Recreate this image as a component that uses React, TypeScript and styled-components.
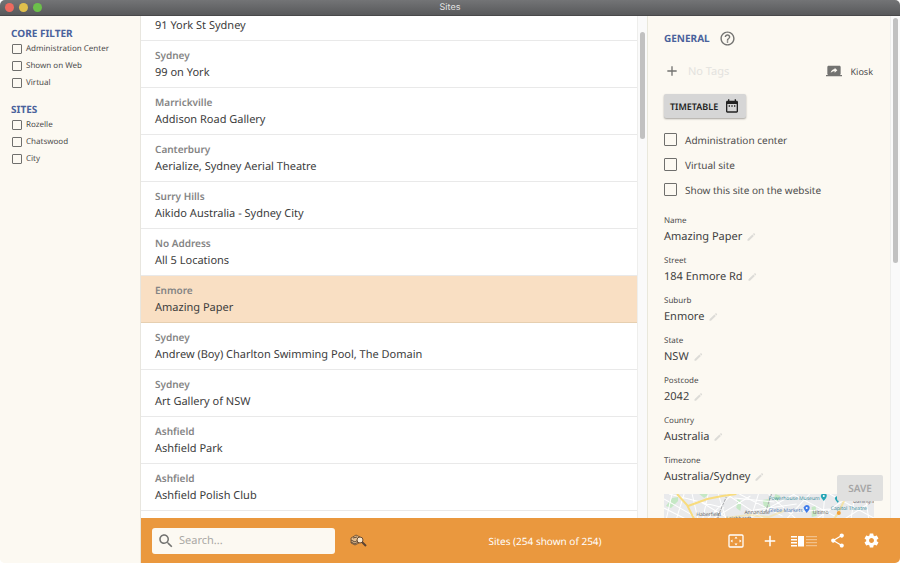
import React, { useLayoutEffect, useRef, useState } from "react";
import styled, { createGlobalStyle } from "styled-components";

const Global = createGlobalStyle`
  *, *::before, *::after { box-sizing: border-box; }
  html, body, #root { height: 100%; margin: 0; }
  body { background: #fff; overflow: hidden; font-family: "Noto Sans", "Open Sans", sans-serif; color: #4c4c4c; text-rendering: geometricPrecision; }
  button, input { font-family: inherit; color: inherit; margin: 0; text-rendering: inherit; }
  button { border: 0; padding: 0; background: none; cursor: pointer; }
  h2, ul, p, dl, dd { margin: 0; padding: 0; list-style: none; }
`;

const Window = styled.div`
  height: 100vh;
  display: flex;
  flex-direction: column;
  overflow: hidden;
  border-radius: 5px;
  background: #fcf9f2;
`;

const TitleBar = styled.header`
  flex: none;
  height: 16px;
  display: grid;
  grid-template-columns: 1fr auto 1fr;
  align-items: center;
  background: linear-gradient(#737476, #58595b);
  border-bottom: 1px solid #48484a;
  color: #e4e4e4;
  font: 9px/14px Inter, Roboto, sans-serif;
`;

const Lights = styled.div`
  display: flex;
  gap: 5px;
  padding-left: 5px;
`;

const Light = styled.button<{ $color: string }>`
  width: 9px;
  height: 9px;
  border-radius: 50%;
  background: ${(p) => p.$color};
`;

const Body = styled.div`
  flex: 1;
  min-height: 0;
  display: grid;
  grid-template-columns: 140px 1fr;
`;

const Sidebar = styled.aside`
  padding: 10px 11px;
  background: #fcf9f2;
`;

const FilterGroup = styled.section`
  margin-bottom: 11px;
`;

const Heading = styled.h2`
  font-size: 10px;
  line-height: 14px;
  font-weight: 700;
  color: #4a629c;
`;

const CheckLabel = styled.label<{ $large?: boolean }>`
  display: flex;
  align-items: center;
  gap: ${(p) => (p.$large ? 8 : 4)}px;
  height: ${(p) => (p.$large ? 25 : 17)}px;
  padding-left: ${(p) => (p.$large ? 0 : 1)}px;
  font-size: ${(p) => (p.$large ? 10 : 8)}px;
`;

const CheckInput = styled.input<{ $large?: boolean }>`
  appearance: none;
  flex: none;
  width: ${(p) => (p.$large ? 13 : 10)}px;
  height: ${(p) => (p.$large ? 13 : 10)}px;
  border: 1px solid #6f6f6d;
  border-radius: 1px;
  &:checked { background: #6f6f6d; }
`;

const Main = styled.div`
  min-width: 0;
  min-height: 0;
  display: flex;
  flex-direction: column;
  border-left: 1px solid #e8e6df;
`;

const Panes = styled.div`
  flex: 1;
  min-height: 0;
  display: grid;
  grid-template-columns: 1fr 253px;
`;

const ScrollPane = styled.section`
  min-width: 0;
  min-height: 0;
  display: grid;
  grid-template-columns: 1fr 10px;
`;

const SiteList = styled.ul`
  min-height: 0;
  overflow-y: auto;
  scrollbar-width: none;
  background: #fff;
`;

const SiteRow = styled.button<{ $selected: boolean }>`
  display: block;
  width: 100%;
  height: 47px;
  padding: 0 14px;
  text-align: left;
  border-bottom: 1px solid ${(p) => (p.$selected ? "#e6cfb0" : "#e9e9e9")};
  background: ${(p) => (p.$selected ? "#f9dfc3" : "#fff")};
`;

const Suburb = styled.span`
  display: block;
  font-size: 10px;
  line-height: 17px;
  font-weight: 600;
  color: #848484;
`;

const SiteName = styled.span`
  display: block;
  font-size: 11px;
  line-height: 17px;
  color: #3c3c3c;
`;

const Track = styled.div<{ $start: number }>`
  padding: ${(p) => p.$start}px 2px 0;
  background: #fafafa;
  border-left: 1px solid #eeeeec;
`;

const Thumb = styled.div<{ $share: number }>`
  height: ${(p) => p.$share}%;
  border-radius: 3px;
  background: #c1c1c1;
`;

const Detail = styled(ScrollPane)`
  position: relative;
  border-left: 1px solid #e9e8dc;
`;

const DetailBody = styled.div`
  min-height: 0;
  overflow: hidden;
  padding: 12px 16px 0;
  background: #fcf9f2;
`;

const Line = styled.div`
  display: flex;
  align-items: center;
`;

const HeadLine = styled(Line)`
  height: 20px;
  gap: 9px;
`;

const TagLine = styled(Line)`
  height: 46px;
  padding-right: 1px;
`;

const IconButton = styled.button`
  display: flex;
  align-items: center;
  justify-content: center;
  color: #737371;
`;

const TagInput = styled.input`
  flex: 1;
  min-width: 0;
  margin-left: 8px;
  padding: 0;
  border: 0;
  outline: 0;
  background: none;
  font-size: 11px;
  &::placeholder { color: #e3e2de; opacity: 1; }
`;

const Kiosk = styled(IconButton)`
  gap: 9px;
  font-size: 9px;

  span { color: #4c4c4c; }
`;

const Timetable = styled.button`
  display: flex;
  align-items: center;
  gap: 6px;
  height: 24px;
  padding: 0 6px;
  border-radius: 2px;
  background: #d6d6d6;
  box-shadow: 0 1px 2px rgba(0, 0, 0, 0.35);
  font-size: 9px;
  font-weight: 600;
  color: #222;
`;

const Checks = styled.div`
  padding: 9px 0 12px;
`;

const Field = styled.div`
  height: 40px;
`;

const FieldName = styled.dt`
  font-size: 8px;
  line-height: 14px;
`;

const FieldValue = styled.dd`
  display: flex;
  align-items: center;
  gap: 4px;
  font-size: 11px;
  line-height: 17px;
  color: #404040;
`;

const MapBox = styled.div`
  height: 100px;
  overflow: hidden;
`;

const Save = styled.button`
  position: absolute;
  right: 17px;
  bottom: 17px;
  width: 46px;
  height: 26px;
  border-radius: 2px;
  background: #e0e0df;
  font-size: 10px;
  font-weight: 600;
  color: #a5a5a5;
`;

const Footer = styled.footer`
  flex: none;
  height: 45px;
  display: grid;
  grid-template-columns: auto 1fr auto;
  align-items: center;
  padding: 0 16px 0 11px;
  background: #ea983e;
  color: #fff;
`;

const FooterSide = styled.div<{ $end?: boolean }>`
  display: flex;
  align-items: center;
  gap: ${(p) => (p.$end ? 12 : 15)}px;
`;

const Search = styled.label`
  display: flex;
  align-items: center;
  gap: 4px;
  width: 183px;
  height: 26px;
  padding: 0 5px;
  border-radius: 3px;
  background: #fcf9f2;
  color: #737371;
`;

const SearchInput = styled.input`
  flex: 1;
  min-width: 0;
  padding: 0;
  border: 0;
  outline: 0;
  background: none;
  font-size: 11px;
  &::placeholder { color: #aaa8a4; opacity: 1; }
`;

const Status = styled.p`
  font-size: 10px;
  text-align: center;
`;

const ToolButton = styled(IconButton)<{ $wide?: boolean }>`
  min-width: ${(p) => (p.$wide ? 26 : 17)}px;
  color: #fff;
`;

const Svg = ({ size = 16, children }: { size?: number; children: React.ReactNode }) => (
  <svg width={size} height={size} viewBox="0 0 24 24" fill="currentColor" aria-hidden="true">
    {children}
  </svg>
);

const Pencil = () => (
  <svg width="10" height="10" viewBox="0 0 10 10" aria-hidden="true">
    <path d="M1.5 8.8V7.3L6.4 2.4L7.9 3.9L3 8.8ZM6.9 1.9L7.6 1.3Q8 1 8.3 1.3L9 2Q9.3 2.4 9 2.7L8.4 3.4Z" fill="#dddcd8" />
  </svg>
);

const MapDrawing = () => (
  <svg width="100%" height="100" viewBox="0 0 209 100" preserveAspectRatio="xMinYMin slice" role="img" aria-label="Site map">
    <rect width="209" height="100" fill="#e9eaec" />
    <g fill="#c5e8c5">
      <path d="M2 12L8 4L14 3L14 7L7 14Z" />
      <path d="M73 5L77 7L76 17L72 14Z" />
      <path d="M98 6L104 5L106 13L100 15Z" />
      <path d="M147 13L151 12L152 22L147 23Z" />
      <path d="M35 0H45L40 4Z" />
      <path d="M111 0L116 2L113 7L109 5Z" />
    </g>
    <g stroke="#fff" strokeWidth="1" fill="none">
      <path d="M0 5L30 22M0 14L24 26M5 0L60 14M35 7L67 26M40 28L68 0M50 24L86 2M62 0L100 25M75 0L118 22M80 27L130 0M104 0L134 27M120 27L145 0M128 0L170 22M150 26L182 4M165 0L209 24M178 26L209 6M86 26L94 0M20 0L12 26M44 0L38 27" />
      <path d="M8 0L2 26M28 0L34 26M54 0L62 26M70 4L110 8M90 16L132 10M132 18L165 15M160 0L158 26M190 0L186 26M200 0L204 26" />
    </g>
    <g stroke="#f8dc7e" strokeWidth="2" fill="none">
      <path d="M13 0L23 11L29 23L33 30" />
      <path d="M24 12L43 5L58 2L72 0" />
      <path d="M62 24L84 21L104 23L121 16" opacity=".4" />
      <path d="M167 28L174 18L180 5" opacity=".6" />
    </g>
    <path d="M52 26L58 12L62 3M101 18L107 0M54 26V18" stroke="#a9abad" fill="none" strokeDasharray="3 1" />
    <g fontSize="5">
      <g fill="#666">
        <text x="32" y="22">Haberfield</text>
        <text x="62" y="26">Leichhardt</text>
        <text x="80" y="20">Annandale</text>
        <text x="148" y="20">Ultimo</text>
        <text x="188" y="9">Darlinghurst</text>
      </g>
      <g fill="#398d9b">
        <text x="155" y="6" textAnchor="end">Powerhouse Museum</text>
        <text x="166" y="16">Capitol Theatre</text>
      </g>
      <text x="138" y="18" textAnchor="end" fill="#4a77b5">Glebe Markets</text>
    </g>
    <path d="M159 7Q156 4 156 2Q157-1 159-1Q162-1 162 2Q162 4 159 7Z" fill="#24a5b5" />
    <path d="M173 9Q170 6 170 4Q171 2 173 2Q175 2 175 4Q175 6 173 9Z" fill="#24a5b5" />
    <path d="M142 19Q139 15 139 13.500Q140 11 142 11Q145 11 145 14Q145 16 142 19Z" fill="#3f7bea" />
    <circle cx="142" cy="14" r="1" fill="#fff" />
    <circle cx="159" cy="2" r="1" fill="#fff" />
    <circle cx="174" cy="19" r="2" fill="#f2a23c" />
  </svg>
);

const sites: [string, string][] = [
  ["Sydney", "91 York St Sydney"],
  ["Sydney", "99 on York"],
  ["Marrickville", "Addison Road Gallery"],
  ["Canterbury", "Aerialize, Sydney Aerial Theatre"],
  ["Surry Hills", "Aikido Australia - Sydney City"],
  ["No Address", "All 5 Locations"],
  ["Enmore", "Amazing Paper"],
  ["Sydney", "Andrew (Boy) Charlton Swimming Pool, The Domain"],
  ["Sydney", "Art Gallery of NSW"],
  ["Ashfield", "Ashfield Park"],
  ["Ashfield", "Ashfield Polish Club"],
  ["", ""],
];

const fields = [
  ["Name", "Amazing Paper"],
  ["Street", "184 Enmore Rd"],
  ["Suburb", "Enmore"],
  ["State", "NSW"],
  ["Postcode", "2042"],
  ["Country", "Australia"],
  ["Timezone", "Australia/Sydney"],
];

const filters = [
  { title: "CORE FILTER", items: ["Administration Center", "Shown on Web", "Virtual"] },
  { title: "SITES", items: ["Rozelle", "Chatswood", "City"] },
];

const Check = ({ text, large }: { text: string; large?: boolean }) => (
  <CheckLabel $large={large}>
    <CheckInput type="checkbox" $large={large} />
    {text}
  </CheckLabel>
);

export default function App() {
  const list = useRef<HTMLUListElement>(null);
  const [selected, setSelected] = useState("Amazing Paper");

  useLayoutEffect(() => {
    if (list.current) list.current.scrollTop = 22;
  }, []);

  return (
    <Window>
      <Global />
      <TitleBar>
        <Lights>
          <Light $color="#ee6a5f" aria-label="Close" />
          <Light $color="#e0c04c" aria-label="Minimise" />
          <Light $color="#6cc04a" aria-label="Zoom" />
        </Lights>
        <span>Sites</span>
      </TitleBar>
      <Body>
        <Sidebar>
          {filters.map((group) => (
            <FilterGroup key={group.title}>
              <Heading>{group.title}</Heading>
              {group.items.map((item) => (
                <Check key={item} text={item} />
              ))}
            </FilterGroup>
          ))}
        </Sidebar>
        <Main>
          <Panes>
            <ScrollPane>
              <SiteList ref={list}>
                {sites.map(([suburb, name]) => (
                  <li key={name}>
                    <SiteRow $selected={name === selected} onClick={() => setSelected(name)}>
                      <Suburb>{suburb}</Suburb>
                      <SiteName>{name}</SiteName>
                    </SiteRow>
                  </li>
                ))}
              </SiteList>
              <Track $start={16}>
                <Thumb $share={22} />
              </Track>
            </ScrollPane>
            <Detail>
              <DetailBody>
                <HeadLine>
                  <Heading>GENERAL</Heading>
                  <IconButton aria-label="Help">
                    <Svg size={17}>
                      <path d="M11 18h2v-2h-2v2zm1-16C6.480 2 2 6.480 2 12s4.480 10 10 10 10-4.480 10-10S17.520 2 12 2zm0 18c-4.410 0-8-3.590-8-8s3.590-8 8-8 8 3.590 8 8-3.590 8-8 8zm0-14c-2.210 0-4 1.790-4 4h2c0-1.100.9-2 2-2s2 .9 2 2c0 2-3 1.750-3 5h2c0-2.250 3-2.500 3-5 0-2.210-1.790-4-4-4z" />
                    </Svg>
                  </IconButton>
                </HeadLine>
                <TagLine>
                  <IconButton aria-label="Add tag">
                    <Svg><path d="M19 13h-6v6h-2v-6H5v-2h6V5h2v6h6v2z" /></Svg>
                  </IconButton>
                  <TagInput placeholder="No Tags" aria-label="Tags" />
                  <Kiosk>
                    <Svg>
                      <path d="M20 18c1.100 0 1.990-.9 1.990-2L22 6c0-1.110-.9-2-2-2H4c-1.110 0-2 .89-2 2v10c0 1.100.89 2 2 2H0v2h24v-2h-4zm-7-3.530v-2.190c-2.780 0-4.610.85-6 2.720.56-2.670 2.110-5.330 6-5.870V7l4 3.730-4 3.740z" />
                    </Svg>
                    <span>Kiosk</span>
                  </Kiosk>
                </TagLine>
                <Timetable>
                  TIMETABLE
                  <Svg>
                    <path d="M9 11H7v2h2v-2zm4 0h-2v2h2v-2zm4 0h-2v2h2v-2zm2-7h-1V2h-2v2H8V2H6v2H5c-1.110 0-1.990.9-1.990 2L3 20c0 1.100.89 2 2 2h14c1.100 0 2-.9 2-2V6c0-1.100-.9-2-2-2zm0 16H5V9h14v11z" />
                  </Svg>
                </Timetable>
                <Checks>
                  <Check large text="Administration center" />
                  <Check large text="Virtual site" />
                  <Check large text="Show this site on the website" />
                </Checks>
                <dl>
                  {fields.map(([name, value]) => (
                    <Field key={name}>
                      <FieldName>{name}</FieldName>
                      <FieldValue>
                        {value}
                        <IconButton aria-label={`Edit ${name}`}><Pencil /></IconButton>
                      </FieldValue>
                    </Field>
                  ))}
                </dl>
                <MapBox><MapDrawing /></MapBox>
              </DetailBody>
              <Track $start={2}>
                <Thumb $share={49} />
              </Track>
              <Save>SAVE</Save>
            </Detail>
          </Panes>
          <Footer>
            <FooterSide>
              <Search>
                <Svg size={18}>
                  <path d="M15.500 14h-.79l-.28-.27C15.410 12.590 16 11.110 16 9.500 16 5.910 13.090 3 9.500 3S3 5.910 3 9.500 5.910 16 9.500 16c1.610 0 3.090-.59 4.230-1.570l.27.28v.79l5 4.990L20.490 19l-4.990-5zm-6 0C7.010 14 5 11.990 5 9.500S7.010 5 9.500 5 14 7.010 14 9.500 11.990 14 9.500 14z" />
                </Svg>
                <SearchInput placeholder="Search..." aria-label="Search" />
              </Search>
              <ToolButton aria-label="Advanced search">
                <svg width="17" height="14" viewBox="0 0 17 14" fill="none" aria-hidden="true">
                  <path d="M1 4L6 1L10 3L9 9L5 11L1 9Z" fill="#e4bd8e" stroke="#7d5a38" />
                  <path d="M1 6L5 8L8 6M1 8L5 10L8 8M3 4L7 3" stroke="#5e4937" />
                  <circle cx="10" cy="6" r="3" fill="#f8e6cd" stroke="#6b4c31" />
                  <path d="M12 8L16 12" stroke="#5a4334" strokeWidth="2" />
                </svg>
              </ToolButton>
            </FooterSide>
            <Status>Sites (254 shown of 254)</Status>
            <FooterSide $end>
              <ToolButton $wide aria-label="Fit to screen">
                <svg width="16" height="14" viewBox="0 0 16 14" aria-hidden="true">
                  <rect x="1" y="1" width="14" height="12" rx="1" fill="none" stroke="#fff" strokeWidth="1.300" />
                  <path d="M8 2.500L9.500 4.500H6.500ZM8 11.500L9.500 9.500H6.500ZM2.500 7L4.500 5.500V8.500ZM13.500 7L11.500 5.500V8.500Z" fill="#fff" />
                </svg>
              </ToolButton>
              <ToolButton aria-label="Add site">
                <Svg size={18}><path d="M19 13h-6v6h-2v-6H5v-2h6V5h2v6h6v2z" /></Svg>
              </ToolButton>
              <ToolButton $wide aria-label="Change layout">
                <svg width="26" height="12" viewBox="0 0 26 12" fill="#fff" aria-hidden="true">
                  <path d="M0 1H6V2.500H0ZM0 4H6V5.500H0ZM0 7H6V8.500H0ZM0 10H6V11.500H0ZM7 1H13V11.500H7Z" />
                  <path d="M15 1H26V2.200H15ZM15 4H26V5.200H15ZM15 7H26V8.200H15ZM15 10H26V11.200H15Z" opacity=".4" />
                </svg>
              </ToolButton>
              <ToolButton aria-label="Share">
                <Svg size={17}>
                  <path d="M18 16.080c-.76 0-1.440.3-1.960.77L8.910 12.700c.05-.23.09-.46.09-.7s-.04-.47-.09-.7l7.050-4.110c.54.5 1.250.81 2.040.81 1.660 0 3-1.340 3-3s-1.340-3-3-3-3 1.340-3 3c0 .24.04.47.09.7L8.040 9.810C7.500 9.310 6.790 9 6 9c-1.660 0-3 1.340-3 3s1.340 3 3 3c.79 0 1.500-.31 2.040-.81l7.120 4.160c-.05.21-.08.43-.08.65 0 1.610 1.310 2.920 2.920 2.920s2.920-1.310 2.920-2.920-1.310-2.920-2.920-2.920z" />
                </Svg>
              </ToolButton>
              <ToolButton $wide aria-label="Settings">
                <Svg size={17}>
                  <path d="M19.430 12.980c.04-.32.07-.64.07-.98s-.03-.66-.07-.98l2.110-1.650c.19-.15.24-.42.12-.64l-2-3.460c-.12-.22-.39-.3-.61-.22l-2.490 1c-.52-.4-1.080-.73-1.690-.98l-.38-2.650C14.460 2.180 14.250 2 14 2h-4c-.25 0-.46.18-.49.42l-.38 2.650c-.61.25-1.170.59-1.690.98l-2.490-1c-.23-.09-.49 0-.61.22l-2 3.460c-.13.22-.07.49.12.64l2.110 1.650c-.04.32-.07.65-.07.98s.03.66.07.98l-2.110 1.650c-.19.15-.24.42-.12.64l2 3.460c.12.22.39.3.61.22l2.490-1c.52.4 1.080.73 1.690.98l.38 2.650c.03.24.24.42.49.42h4c.25 0 .46-.18.49-.42l.38-2.650c.61-.25 1.170-.59 1.690-.98l2.490 1c.23.09.49 0 .61-.22l2-3.460c.12-.22.07-.49-.12-.64l-2.110-1.650zM12 15.500c-1.930 0-3.500-1.570-3.500-3.500s1.570-3.500 3.500-3.500 3.500 1.570 3.500 3.500-1.570 3.500-3.500 3.500z" />
                </Svg>
              </ToolButton>
            </FooterSide>
          </Footer>
        </Main>
      </Body>
    </Window>
  );
}
